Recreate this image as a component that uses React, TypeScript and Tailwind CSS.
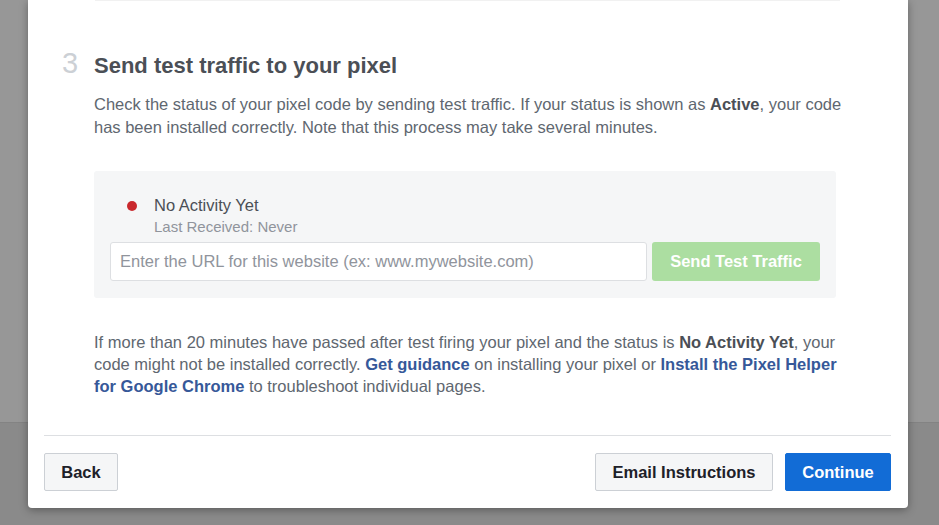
export default function App() {
  const font = { fontFamily: '"Liberation Sans", Arial, Helvetica, sans-serif' };
  return (
    <div className="relative w-[939px] h-[525px] overflow-hidden" style={font}>
      <div className="flex flex-col h-full">
        <div className="h-[422px] bg-[#979797]" />
        <div className="h-px bg-[#838383]" />
        <div className="flex-1 bg-[#8a8a8a]" />
      </div>
      <div className="absolute left-[28px] top-0 w-[880px] h-[508px] bg-white rounded-b-[4px] shadow-[0_2px_8px_rgba(0,0,0,0.35)] flex flex-col">
        <div className="ml-[67px] w-[745px] h-px bg-[#f1f1f1]" />
        <div className="pl-[34px] pr-[62px]">
          <div className="flex items-baseline mt-[46px]">
            <div className="w-[32px] shrink-0 text-[29px] leading-[32px] text-[#ccd0d5] font-light">3</div>
            <div className="text-[22px] leading-[26px] font-bold text-[#4b4f56]">Send test traffic to your pixel</div>
          </div>
          <div className="ml-[32px]">
            <p className="mt-[14px] text-[16.5px] leading-[22.5px] text-[#606770]">
              Check the status of your pixel code by sending test traffic. If your status is shown as{" "}
              <span className="font-bold text-[#4b4f56]">Active</span>, your code has been installed correctly. Note that this process may take several minutes.
            </p>
            <div className="mt-[33px] w-[742px] bg-[#f5f6f7] rounded-[3px] pt-[23px] pb-[17px] px-[16px]">
              <div className="flex items-center pl-[17px]">
                <div className="w-[10px] h-[10px] rounded-full bg-[#c9282d] mt-[2px]" />
                <div className="ml-[17px] text-[16.5px] leading-[22px] text-[#4b4f56]">No Activity Yet</div>
              </div>
              <div className="pl-[44px] text-[15px] leading-[18px] text-[#90949c] mt-[2px]">Last Received: Never</div>
              <div className="flex mt-[6px] gap-[5px]">
                <div className="w-[537px] h-[39px] bg-white border border-[#dddfe2] rounded-[3px] flex items-center px-[9px] text-[16.5px] text-[#90949c]">
                  Enter the URL for this website (ex: www.mywebsite.com)
                </div>
                <div className="w-[168px] h-[39px] bg-[#acdea1] rounded-[3px] flex items-center justify-center text-[16.5px] font-bold text-white">
                  Send Test Traffic
                </div>
              </div>
            </div>
            <p className="mt-[33px] w-[746px] text-[16.5px] leading-[22px] text-[#606770]">
              If more than 20 minutes have passed after test firing your pixel and the status is{" "}
              <span className="font-bold text-[#4b4f56]">No Activity Yet</span>, your code might not be installed correctly.{" "}
              <span className="font-bold text-[#365899]">Get guidance</span> on installing your pixel or{" "}
              <span className="font-bold text-[#365899]">Install the Pixel Helper for Google Chrome</span> to troubleshoot individual pages.
            </p>
          </div>
        </div>
        <div className="mt-auto ml-[16px] mr-[17px] border-t border-[#dddfe2] pt-[17px] pb-[17px] flex">
          <div className="w-[74px] h-[38px] bg-[#f5f6f7] border border-[#ccd0d5] rounded-[2px] flex items-center justify-center text-[16.5px] font-bold text-[#1d2129]">
            Back
          </div>
          <div className="ml-auto w-[178px] h-[38px] bg-[#f5f6f7] border border-[#ccd0d5] rounded-[2px] flex items-center justify-center text-[16.5px] font-bold text-[#1d2129]">
            Email Instructions
          </div>
          <div className="ml-[12px] w-[106px] h-[38px] bg-[#126cd6] border border-[#126cd6] rounded-[2px] flex items-center justify-center text-[16.5px] font-bold text-white">
            Continue
          </div>
        </div>
      </div>
    </div>
  );
}
